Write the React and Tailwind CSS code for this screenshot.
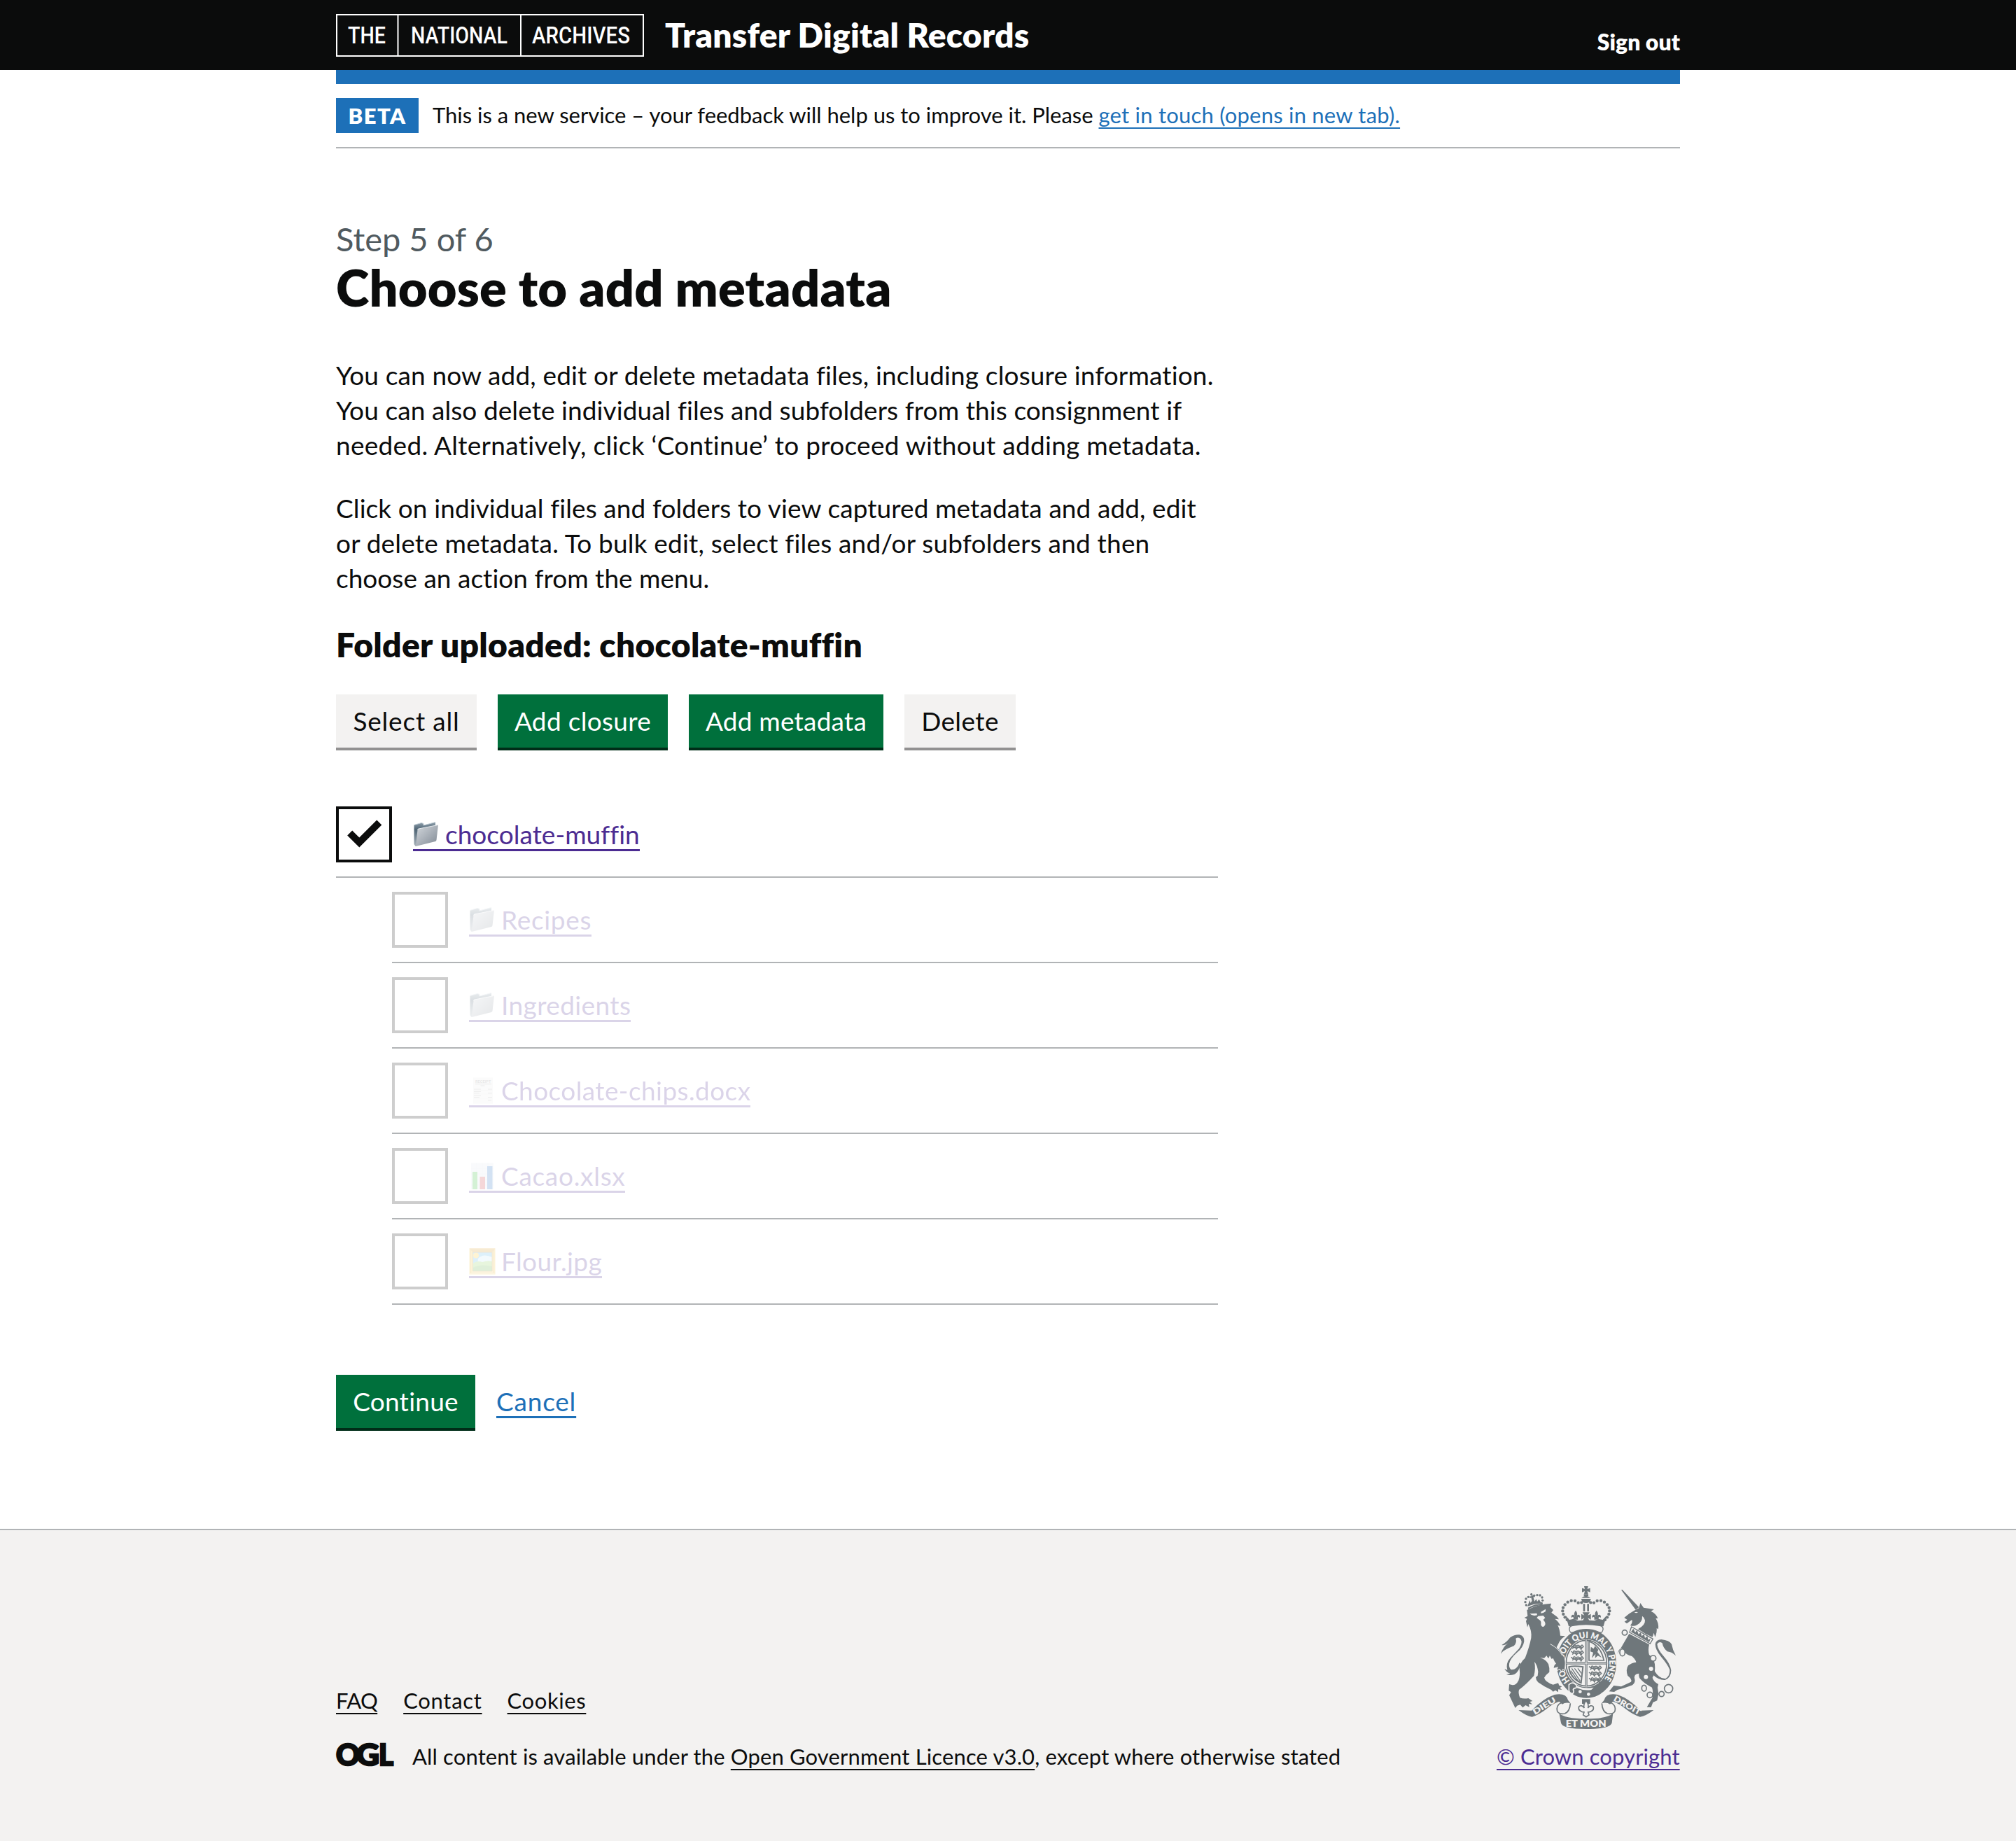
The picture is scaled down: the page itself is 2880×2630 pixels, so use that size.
const buttonBase = "flex h-[76px] items-center justify-center text-[37px] whitespace-nowrap";
const greenButton = "bg-[#00703c] text-white shadow-[0_4px_0_#002d18]";
const greyButton = "bg-[#f3f2f1] text-[#0b0c0c] shadow-[0_4px_0_#929191]";
const underline = "underline decoration-2 underline-offset-[6px] [text-decoration-skip-ink:none]";

function ArchivesLogo() {
  return (
    <svg className="mt-5 h-[61px] w-[440px] shrink-0" viewBox="0 0 440 61" fill="none">
      <rect x="1" y="1" width="438" height="59" stroke="#fff" strokeWidth="2" />
      <path d="M88.5 0V61M264 0V61" stroke="#fff" strokeWidth="2" />
      <g fill="#fff" fontFamily="Roboto, sans-serif" fontWeight="500" fontSize="33">
        <text x="17" y="42" textLength="54" lengthAdjust="spacingAndGlyphs">THE</text>
        <text x="107" y="42" textLength="138" lengthAdjust="spacingAndGlyphs">NATIONAL</text>
        <text x="280" y="42" textLength="140" lengthAdjust="spacingAndGlyphs">ARCHIVES</text>
      </g>
    </svg>
  );
}

function Folder() {
  return (
    <svg className="h-[38px] w-[38px]" viewBox="0 0 38 38">
      <defs>
        <linearGradient id="folderFront" x1="0" y1="0" x2="1" y2="1">
          <stop offset="0" stopColor="#d3d8dd" />
          <stop offset="0.500" stopColor="#aab1b9" />
          <stop offset="1" stopColor="#7f8993" />
        </linearGradient>
        <linearGradient id="folderBack" x1="0" y1="0" x2="0" y2="1">
          <stop offset="0" stopColor="#92a2ae" />
          <stop offset="0.300" stopColor="#4e6474" />
          <stop offset="1" stopColor="#a9b3bb" />
        </linearGradient>
      </defs>
      <path d="M1.500 5.500 12 2.500 15 3.500V6L32 1.500V9L7 34 3.500 36 1.500 33Z" fill="url(#folderBack)" />
      <path d="M1.500 5.500 12 2.500 15 3.500V6L32 1.500" fill="none" stroke="#c6d2da" strokeWidth="1" />
      <path d="M6.500 12.500Q6.700 11.300 8 11L36 5.500 33.500 27Q33.300 28.500 32 29L4 36Z" fill="url(#folderFront)" />
      <path d="M6.500 12.500Q6.700 11.300 8 11L36 5.500" fill="none" stroke="#e6eaed" strokeWidth="1" />
    </svg>
  );
}

function Receipt() {
  return (
    <svg className="h-[38px] w-[38px]" viewBox="0 0 38 38">
      <rect x="6" y="0.500" width="28" height="37" fill="#ececec" />
      <text x="9" y="8" fontFamily="Roboto, sans-serif" fontWeight="700" fontSize="6" textLength="22.500" lengthAdjust="spacingAndGlyphs" fill="#8b8b8b">RECEIPT</text>
      <path d="M9 9.700H32" stroke="#888" strokeWidth="0.900" />
      <path d="M16.500 12H22.500" stroke="#aaa" strokeWidth="1.200" />
      <path d="M7 17H17M27 17H33M7 20.500H17M7 22.500H15M27 22.500H33M7 26.500H17M7 28.500H15M27 28.500H33M27 33H32" stroke="#a5a5a5" strokeWidth="1.100" />
      <path d="M7 18.500H33M7 24H33M7 30H33" stroke="#d0d0d0" strokeWidth="0.600" />
    </svg>
  );
}

function BarChart() {
  return (
    <svg className="h-[38px] w-[38px]" viewBox="0 0 38 38">
      <rect x="3" y="0.500" width="32" height="37.500" fill="#e4eaf1" />
      <path d="M3 8H35M3 16H35M3 24H35M3 32H35M11 0V38M19 0V38M27 0V38" stroke="#d3dde8" strokeWidth="0.700" />
      <rect x="5" y="13" width="7" height="25" fill="#2fbb35" />
      <rect x="15.500" y="20" width="7.500" height="18" fill="#d23b3f" />
      <rect x="26" y="5" width="7.500" height="33" fill="#2b72c4" />
    </svg>
  );
}

function FramedPicture() {
  return (
    <svg className="h-[38px] w-[38px]" viewBox="0 0 38 38">
      <rect x="0.500" y="0.500" width="37" height="37" fill="#f5c63c" />
      <path d="M0.500 0.500H37.500L33 6H5.500Z" fill="#d69a25" />
      <path d="M0.500 37.500H37.500L33 32.500H5.500Z" fill="#fbe07a" />
      <rect x="2.500" y="2.500" width="33" height="33" fill="none" stroke="#d9a02d" strokeWidth="1" />
      <rect x="5.500" y="6" width="27.500" height="27" fill="#5cb9ea" />
      <path d="M13 15Q20 7 33 13V24H12Z" fill="#c4e9f8" />
      <circle cx="10" cy="10.500" r="4" fill="#fbc92e" />
      <path d="M5.500 22Q12 17 19 20 27 17 33 19V33H5.500Z" fill="#8bcf5a" />
      <path d="M5.500 28Q16 22 33 26V33H5.500Z" fill="#63b545" />
      <rect x="5.500" y="6" width="27.500" height="27" fill="none" stroke="#a87824" strokeWidth="0.800" />
    </svg>
  );
}

function OglLogo() {
  return (
    <svg className="-mt-[9px] h-[56px] w-[82px] shrink-0 overflow-visible" viewBox="0 -10 82 56">
      <g fill="#0b0c0c" stroke="#0b0c0c" strokeWidth="2.500" fontFamily="Lato, sans-serif" fontWeight="900" fontSize="42">
        <text x="0" y="32" textLength="34" lengthAdjust="spacingAndGlyphs">O</text>
        <text x="29" y="32" textLength="33" lengthAdjust="spacingAndGlyphs">G</text>
        <text x="61" y="32" textLength="21" lengthAdjust="spacingAndGlyphs">L</text>
      </g>
    </svg>
  );
}

const crownBeads = [[418, 148], [404, 149], [390, 141], [374, 140], [359, 146], [347, 157], [339, 170], [337, 184], [340, 198], [347, 211], [356, 222]];
const lionCrownBeads = [[181, 159], [177, 146], [180, 132], [190, 124], [228, 116], [240, 117], [249, 126], [251, 139], [247, 151], [203, 113], [215, 118]];

function Beads() {
  return crownBeads.map(([x, y]) => <circle key={`${x}-${y}`} cx={x} cy={y} r="6.500" />);
}

function Fleur({ x, y }) {
  return (
    <g transform={`translate(${x} ${y})`}>
      <path d="M0-24Q11-10 4 2L3 5H-3L-4 2Q-11-10 0-24Z" />
      <path d="M3 4Q6-8 15-5 22 0 17 8 14 2 10 5 8 9 10 15H-10Q-8 9-10 5-14 2-17 8-22 0-15-5-6-8-3 4Z" />
    </g>
  );
}

function PassantLions({ x, y }) {
  return (
    <g transform={`translate(${x} ${y})`} fill="none" stroke="#6f777b" strokeWidth="4.500">
      {[0, 25, 50].map((dy) => (
        <path key={dy} d={`M2 ${dy + 4}l8 6 5-8 8 4 9-3 10 5 7-6 6 7-4 4M8 ${dy + 18}l5-7 9 3 3 6 6-9 10 3 4 7 5-9M14 ${dy + 11}h34`} />
      ))}
    </g>
  );
}

function Crest() {
  return (
    <svg className="ml-[6px] h-[204px] w-[250px]" viewBox="72 78 750 612" fill="#6f777b">
      <defs>
        <path id="garter" d="M369 484A98 108 0 1 1 509 484" />
      </defs>

      {/* garter and shield */}
      <ellipse cx="439" cy="408" rx="128" ry="149" />
      <ellipse cx="439" cy="408" rx="93" ry="103" fill="#f3f2f1" />
      <ellipse cx="439" cy="408" rx="87" ry="98" fill="none" stroke="#6f777b" strokeWidth="5" />
      <path d="M438 306V508M352 408H524" stroke="#6f777b" strokeWidth="10" />
      <path d="M438 306V508M352 408H524" stroke="#f3f2f1" strokeWidth="3" />
      <PassantLions x={371} y={328} />
      <PassantLions x={448} y={418} />
      <path d="M450 314Q500 332 514 396L450 396Z" fill="none" stroke="#6f777b" strokeWidth="5" />
      <path d="M458 338 470 346 476 334 490 350 486 360 504 384 488 376 476 386 478 368 462 386 468 362 456 358Z" />
      <path d="M364 424Q388 418 424 424L416 492Q368 470 364 424Z" fill="none" stroke="#6f777b" strokeWidth="6" />
      <path d="M376 430 412 484M388 430 416 468M402 430 418 452M372 440 406 488" stroke="#6f777b" strokeWidth="4" />
      <text fill="#f3f2f1" fontFamily="Lato, sans-serif" fontWeight="800" fontSize="38">
        <textPath href="#garter" textLength="478" lengthAdjust="spacingAndGlyphs">HONI SOIT QUI MAL Y PENSE</textPath>
      </text>
      <path d="M364 500Q378 486 392 498 400 506 394 514 384 514 382 522 388 530 380 538 366 538 364 524Z" stroke="#f3f2f1" strokeWidth="5" />
      <path d="M396 504Q430 520 470 512L460 522Q430 528 398 514Z" fill="#f3f2f1" />
      <circle cx="412" cy="530" r="7" fill="#f3f2f1" />
      <circle cx="448" cy="541" r="7" fill="#f3f2f1" />

      {/* lion */}
      <path d="M184 180Q230 155 288 152L284 167 297 180 289 191 313 209 321 220 304 218Q318 228 328 248L316 246Q325 262 327 290L348 292Q326 306 318 326L311 340Q328 355 339 376 348 392 347 412L345 438 338 432 332 442 325 432 314 438 318 424 299 428Q300 414 309 410 300 398 296 386L290 390 282 376 276 388 268 376 258 386 240 384Q268 394 276 412 282 430 280 446 264 458 258 470 262 488 296 500L318 493 322 503 334 508 325 514 334 522 318 520 318 532 306 524 296 530 288 522Q256 508 232 490 222 480 222 468L230 462 232 445Q228 414 216 402 222 430 214 462 180 500 150 522 146 538 154 556 170 562 190 558L208 570 196 574 207 584 192 582 194 596 178 588 166 598 155 586 142 590 134 600 108 545 116 532 106 526 108 498 122 502Q138 502 148 482 156 460 152 432 154 404 176 386 194 340 202 300 206 270 190 240L186 254 180 228 184 218 173 213 187 206Z" stroke="#f3f2f1" strokeWidth="5" paintOrder="stroke" />
      <path d="M284 326Q320 344 336 376" fill="none" stroke="#f3f2f1" strokeWidth="3" />
      <path d="M72 368Q82 336 104 322 86 334 76 330 98 318 112 298 132 284 152 286 174 292 172 314 168 340 144 360 112 388 108 410 106 430 118 436 142 436 152 406L158 412Q148 448 130 456 110 462 96 456L112 452Q96 448 88 432L100 438Q92 408 112 386L150 346Q166 320 158 306 148 294 136 302 142 320 128 334 108 342 96 348 82 354 72 368Z" />
      <path d="M188 170Q215 154 250 152L252 160Q218 160 190 177Z" />
      {lionCrownBeads.map(([x, y]) => <circle key={`${x}-${y}`} cx={x} cy={y} r="5" />)}
      <path d="M204 107 211 124 218 148 208 152 203 130ZM186 165 196 138 200 150 208 136 215 146 224 133 228 144 236 134 246 152Q214 152 186 165ZM195 122 218 117 218 124 197 129Z" />
      <g fill="#f3f2f1">
        <path d="M196 196 226 194 228 202Q208 208 196 196ZM244 188 264 176 264 186Q254 194 244 194Z" />
        <path d="M226 214 232 206 254 204 262 214 254 222Q270 240 258 250 248 256 244 242 246 228 240 224Z" />
      </g>

      {/* unicorn */}
      <path d="M588 94 593 93 664 168 650 179Z" />
      <path d="M601 213 622 196 648 180 664 172 670 150 684 170 728 177 716 186Q738 196 745 216L736 216Q750 236 747 262L740 258Q742 278 733 296L728 278 722 296Q690 284 660 262 692 244 690 224 688 212 678 206 680 230 656 244 642 252 627 246 638 234 634 222L612 238 602 230 614 222Z" />
      <path d="M644 190Q654 186 660 190 652 196 644 190Z" fill="#f3f2f1" />
      <path d="M622 282 708 328Q702 352 708 372 728 386 732 412 736 450 722 470 726 486 747 498L744 512 748 540 742 568 724 576 716 597 698 596 722 556Q726 530 720 512 688 496 672 478 662 468 664 452 640 454 646 476 650 490 636 502 600 516 572 522L558 531 536 529 556 504 588 508 630 488Q636 476 616 462 606 436 618 418 632 406 652 404 650 392 634 378 612 372 604 362 602 348 586 342 574 354 572 368 586 378L600 382 596 390 602 404 584 396 576 404Q556 378 552 352 556 332 574 326 590 328 606 330 594 316 566 310 556 294 536 294L530 286Q544 276 562 280 572 288 582 308 598 318 612 306Z" stroke="#f3f2f1" strokeWidth="5" paintOrder="stroke" />
      <path d="M632 252 724 304 712 324 624 276Z" fill="#f3f2f1" stroke="#6f777b" strokeWidth="4" />
      <path d="M630 274 640 260 648 276 656 266 662 284 672 276 676 292 686 284 690 300 700 292 704 308 714 302 708 318Z" />
      <path d="M730 440Q752 476 778 474 798 462 796 436 786 412 760 382 734 350 734 326 738 306 760 306 794 310 804 326 808 350 822 376 806 360 786 358 768 344 764 322 750 312 742 326 744 348 768 376 798 410 802 438 802 470 776 480 750 482 722 456Z" />
      <g fill="none" stroke="#6f777b" strokeWidth="5">
        <circle cx="603" cy="277" r="11" />
        <ellipse cx="593" cy="362" rx="11" ry="15" fill="#f3f2f1" />
        <circle cx="725" cy="387" r="12" fill="#f3f2f1" />
        <ellipse cx="686" cy="515" rx="10" ry="13" fill="#f3f2f1" />
        <circle cx="711" cy="544" r="12" fill="#f3f2f1" />
        <circle cx="761" cy="540" r="11" />
        <circle cx="791" cy="517" r="18" />
      </g>
      <g fill="#f3f2f1">
        <circle cx="582" cy="302" r="8" />
        <circle cx="716" cy="432" r="9" />
        <circle cx="694" cy="467" r="9" />
      </g>

      {/* crown */}
      <path d="M429 78H446L443 90 455 86V104L443 99 446 111H429L432 99 420 104V86L432 90ZM428 112H447V121H428ZM418 128Q437 112 456 128ZM417 132H458Q457 150 437.500 150 418 150 417 132Z" />
      <path d="M425 154H433V186H425ZM442 154H450V186H442Z" />
      <Beads />
      <g transform="translate(875 0) scale(-1 1)"><Beads /></g>
      <Fleur x={393} y={206} />
      <Fleur x={482} y={206} />
      <path d="M422 190H453L445 203 458 197V221L445 214 453 228H422L430 214 417 221V197L430 203Z" />
      <path d="M350 204 366 222 384 218 402 226 422 224H453L473 226 491 218 509 222 525 204 512 250H363Z" />
      <path d="M366 264Q364 250 380 247 437.500 236 496 247 512 250 510 264 507 280 496 276 437.500 250 380 276 368 280 366 264Z" fill="#f3f2f1" stroke="#6f777b" strokeWidth="4" />

      {/* motto ribbon */}
      <path d="M420 562H455V582H420Z" />
      <path d="M437.500 568Q452 588 445 600 456 584 468 594 474 608 456 616L446 618 450 630 437.500 638 425 630 429 618 419 616Q401 608 407 594 419 584 430 600 423 588 437.500 568Z" fill="#f3f2f1" stroke="#6f777b" strokeWidth="5" />
      <path d="M148 609 204 611Q252 560 302 543 352 534 360 566L371 580Q350 574 335 584L322 572Q296 580 268 604 236 630 206 638 184 636 148 609Z" />
      <path d="M727 609 671 611Q623 560 573 543 523 534 515 566L504 580Q525 574 540 584L553 572Q579 580 607 604 639 630 669 638 691 636 727 609Z" />
      <g fill="none" stroke="#6f777b" strokeWidth="5">
        <path d="M330 578Q308 588 314 614 322 628 346 624 368 616 370 580" />
        <path d="M545 578Q567 588 561 614 553 628 529 624 507 616 505 580" />
      </g>
      <path d="M322 622Q344 646 437.500 646 531 646 553 622L548 664Q542 690 437.500 690 333 690 330 664Z" />
      <g fill="#f3f2f1" fontFamily="Lato, sans-serif" fontWeight="800">
        <text x="350" y="681" fontSize="41" textLength="174" lengthAdjust="spacingAndGlyphs">ET MON</text>
        <text transform="translate(218 630) rotate(-32)" fontSize="34" textLength="110" lengthAdjust="spacingAndGlyphs">DIEU</text>
        <text transform="translate(553 567) rotate(30)" fontSize="34" textLength="128" lengthAdjust="spacingAndGlyphs">DROIT</text>
      </g>
    </svg>
  );
}

function Row({ icon: Icon, label, checked, tracking }) {
  return (
    <div className={checked ? "flex" : "flex opacity-20"}>
      <span className="flex size-20 shrink-0 items-center justify-center border-4 border-[#0b0c0c]">
        {checked && (
          <svg className="size-[72px]" viewBox="0 0 72 72" fill="none">
            <path d="M15.700 34 29.300 47.500 57.800 19" stroke="#0b0c0c" strokeWidth="10" />
          </svg>
        )}
      </span>
      <a href="#" className="mt-[15px] ml-[30px] flex h-[49px] border-b-3 border-[#4c2c92] text-[37px] leading-[50px] text-[#4c2c92]">
        <span className="mt-[6px] mr-2 h-[38px] w-[38px]"><Icon /></span>
        <span className={tracking}>{label}</span>
      </a>
    </div>
  );
}

const children = [
  { label: "Recipes", icon: Folder, tracking: "tracking-[0.7px]" },
  { label: "Ingredients", icon: Folder, tracking: "tracking-[0.4px]" },
  { label: "Chocolate-chips.docx", icon: Receipt, tracking: "tracking-[0.4px]" },
  { label: "Cacao.xlsx", icon: BarChart, tracking: "tracking-[0.7px]" },
  { label: "Flour.jpg", icon: FramedPicture, tracking: "tracking-[0.4px]" },
];

export default function App() {
  return (
    <div className="min-h-[2630px] bg-white font-['Lato','Noto_Sans',sans-serif] text-[#0b0c0c]">
      <header className="h-[100px] bg-[#0b0c0c] text-white">
        <div className="mx-auto flex w-[1920px]">
          <ArchivesLogo />
          <span className="mt-5 ml-[30px] text-[48px] leading-[60px] font-extrabold tracking-[0.2px]">Transfer Digital Records</span>
          <a href="#" className="mt-10 ml-auto text-[32px] leading-10 font-extrabold">Sign out</a>
        </div>
      </header>

      <div className="mx-auto w-[1920px]">
        <div className="h-5 bg-[#1d70b8]" />
        <div className="flex border-b-2 border-[#b1b4b6] py-5">
          <strong className="flex h-[50px] w-[118px] items-center justify-center bg-[#1d70b8] text-[31px] font-extrabold tracking-[1.5px] text-white">BETA</strong>
          <p className="ml-5 text-[31px] leading-[49px] tracking-[-0.02px] whitespace-pre">
            {"This is a new service – your feedback will help us to improve it. Please "}
            <a href="#" className={`${underline} tracking-[0.22px] text-[#1d70b8]`}>get in touch (opens in new tab).</a>
          </p>
        </div>

        <main className="w-[1260px] pt-[100px]">
          <h1>
            <span className="block text-[47px] leading-[58px] text-[#505a5f]">Step 5 of 6</span>
            <span className="block text-[72px] leading-[80px] font-extrabold tracking-[0.2px]">Choose to add metadata</span>
          </h1>
          <p className="mt-[61px] text-[37px] leading-[50px] whitespace-nowrap">
            <span className="block tracking-[0.14px]">You can now add, edit or delete metadata files, including closure information.</span>
            <span className="block tracking-[0.08px]">You can also delete individual files and subfolders from this consignment if</span>
            <span className="block tracking-[0.29px]">needed. Alternatively, click ‘Continue’ to proceed without adding metadata.</span>
          </p>
          <p className="mt-10 text-[37px] leading-[50px] whitespace-nowrap">
            <span className="block tracking-[0.09px]">Click on individual files and folders to view captured metadata and add, edit</span>
            <span className="block tracking-[0.19px]">or delete metadata. To bulk edit, select files and/or subfolders and then</span>
            <span className="block tracking-[0.02px]">choose an action from the menu.</span>
          </p>
          <h2 className="mt-10 text-[48px] leading-[60px] font-extrabold tracking-[0.24px]">Folder uploaded: chocolate-muffin</h2>

          <div className="mt-[41px] flex">
            <button className={`${buttonBase} ${greyButton} w-[201px] tracking-[0.8px]`}>Select all</button>
            <button className={`${buttonBase} ${greenButton} ml-[30px] w-[243px] tracking-[0.3px]`}>Add closure</button>
            <button className={`${buttonBase} ${greenButton} ml-[30px] w-[278px] tracking-[0.2px]`}>Add metadata</button>
            <button className={`${buttonBase} ${greyButton} ml-[30px] w-[159px] tracking-[0.4px]`}>Delete</button>
          </div>

          <div className="mt-[84px]">
            <div className="border-b-2 border-[#b1b4b6] pb-5">
              <Row icon={Folder} label="chocolate-muffin" tracking="tracking-[0.02px]" checked />
            </div>
            <ul className="pl-20">
              {children.map((item) => (
                <li key={item.label} className="border-b-2 border-[#b1b4b6] py-5">
                  <Row {...item} />
                </li>
              ))}
            </ul>
          </div>

          <div className="mt-[100px] flex">
            <button className={`${buttonBase} ${greenButton} w-[199px] tracking-[0.25px]`}>Continue</button>
            <a href="#" className="ml-[30px] text-[37px] leading-[76px] tracking-[0.8px] text-[#1d70b8] underline decoration-3 underline-offset-[7px]">Cancel</a>
          </div>
        </main>
      </div>

      <footer className="mt-[144px] h-[446px] border-t-2 border-[#b1b4b6] bg-[#f3f2f1]">
        <div className="mx-auto flex w-[1920px] justify-between text-[31px] leading-10">
          <div className="pt-[223px]">
            <div className="flex">
              <a href="#" className={`${underline} tracking-[-0.6px]`}>FAQ</a>
              <a href="#" className={`${underline} ml-[37px] tracking-[0.7px]`}>Contact</a>
              <a href="#" className={`${underline} ml-9 tracking-[0.6px]`}>Cookies</a>
            </div>
            <div className="mt-10 flex">
              <OglLogo />
              <p className="ml-[27px] tracking-[0.14px] whitespace-nowrap">
                All content is available under the <a href="#" className={underline}>Open Government Licence v3.0</a>, except where otherwise stated
              </p>
            </div>
          </div>
          <div className="w-[262px] pt-20">
            <Crest />
            <a href="#" className={`${underline} mt-[19px] block tracking-[0.1px] whitespace-nowrap text-[#4c2c92]`}>© Crown copyright</a>
          </div>
        </div>
      </footer>
    </div>
  );
}
